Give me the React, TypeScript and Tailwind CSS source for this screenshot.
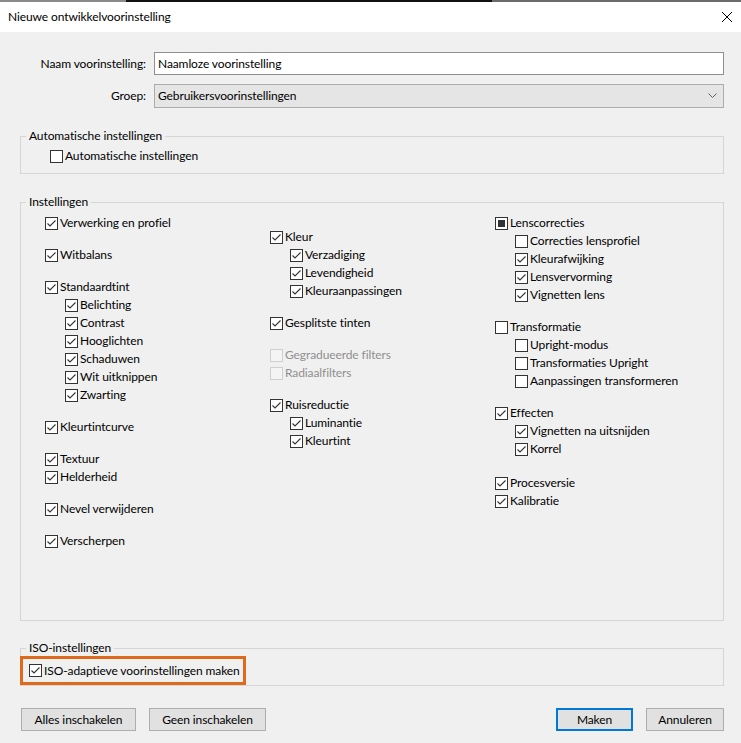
import React from 'react';

type State = 'on' | 'off' | 'mixed' | 'disabled';

interface Item {
  label: string;
  state?: State;
  sub?: boolean;
}

const Check: React.FC<{ state: State }> = ({ state }) => (
  <span
    className={`w-[13px] h-[13px] shrink-0 border flex items-center justify-center ${
      state === 'disabled' ? 'border-[#cfcfcf] bg-[#f4f4f4]' : 'border-[#333333] bg-white'
    }`}
  >
    {state === 'on' && (
      <svg width="11" height="11" viewBox="0 0 11 11">
        <path d="M1.5 5.5 L4 8 L9.5 2.5" fill="none" stroke="#333333" strokeWidth="1.1" />
      </svg>
    )}
    {state === 'mixed' && <span className="w-[7px] h-[7px] bg-[#333333]" />}
  </span>
);

const Row: React.FC<{ item: Item }> = ({ item }) => {
  const state = item.state ?? 'on';
  return (
    <div className={`h-[18px] flex items-center gap-[2px] ${item.sub ? 'pl-[20px]' : ''}`}>
      <Check state={state} />
      <span className={`whitespace-nowrap ${state === 'disabled' ? 'text-[#8f8f8f]' : 'text-black'}`}>
        {item.label}
      </span>
    </div>
  );
};

const col1: Item[][] = [
  [{ label: 'Verwerking en profiel' }],
  [{ label: 'Witbalans' }],
  [
    { label: 'Standaardtint' },
    { label: 'Belichting', sub: true },
    { label: 'Contrast', sub: true },
    { label: 'Hooglichten', sub: true },
    { label: 'Schaduwen', sub: true },
    { label: 'Wit uitknippen', sub: true },
    { label: 'Zwarting', sub: true },
  ],
  [{ label: 'Kleurtintcurve' }],
  [{ label: 'Textuur' }, { label: 'Helderheid' }],
  [{ label: 'Nevel verwijderen' }],
  [{ label: 'Verscherpen' }],
];

const col2: Item[][] = [
  [
    { label: 'Kleur' },
    { label: 'Verzadiging', sub: true },
    { label: 'Levendigheid', sub: true },
    { label: 'Kleuraanpassingen', sub: true },
  ],
  [{ label: 'Gesplitste tinten' }],
  [
    { label: 'Gegradueerde filters', state: 'disabled' },
    { label: 'Radiaalfilters', state: 'disabled' },
  ],
  [
    { label: 'Ruisreductie' },
    { label: 'Luminantie', sub: true },
    { label: 'Kleurtint', sub: true },
  ],
];

const col3: Item[][] = [
  [
    { label: 'Lenscorrecties', state: 'mixed' },
    { label: 'Correcties lensprofiel', sub: true, state: 'off' },
    { label: 'Kleurafwijking', sub: true },
    { label: 'Lensvervorming', sub: true },
    { label: 'Vignetten lens', sub: true },
  ],
  [
    { label: 'Transformatie', state: 'off' },
    { label: 'Upright-modus', sub: true, state: 'off' },
    { label: 'Transformaties Upright', sub: true, state: 'off' },
    { label: 'Aanpassingen transformeren', sub: true, state: 'off' },
  ],
  [
    { label: 'Effecten' },
    { label: 'Vignetten na uitsnijden', sub: true },
    { label: 'Korrel', sub: true },
  ],
  [{ label: 'Procesversie' }, { label: 'Kalibratie' }],
];

const Column: React.FC<{ groups: Item[][]; top: string }> = ({ groups, top }) => (
  <div className={`flex flex-col gap-[14px] ${top}`}>
    {groups.map((g, i) => (
      // last block in the right column sits a touch lower in the original
      <div key={i} className={`flex flex-col ${i === 3 && g[0].label === 'Procesversie' ? 'mt-[2px]' : ''}`}>
        {g.map((it) => (
          <Row key={it.label} item={it} />
        ))}
      </div>
    ))}
  </div>
);

const Legend: React.FC<{ children: React.ReactNode }> = ({ children }) => (
  <legend className="ml-[5px] px-[3px] leading-[16px] text-black">{children}</legend>
);

const Button: React.FC<{ children: React.ReactNode; w: string; primary?: boolean }> = ({ children, w, primary }) => (
  <button
    className={`${w} h-[23px] bg-[#e1e1e1] text-black flex items-center justify-center ${
      primary ? 'border-2 border-[#0078d7]' : 'border border-[#adadad]'
    }`}
  >
    {children}
  </button>
);

export default function App() {
  return (
    <div className="w-[741px] h-[743px] bg-[#f0f0f0] text-[12px] tracking-[-0.1px] text-black overflow-hidden font-['Lato',sans-serif]">
      {/* top edge of the window behind */}
      <div className="h-[2px] flex">
        <div className="w-[126px] bg-[#8a8a8a]" />
        <div className="w-[366px] bg-[#111111]" />
        <div className="flex-1 bg-[#6a6a6a]" />
      </div>

      {/* Title bar */}
      <div className="h-[30px] bg-white flex items-center justify-between pl-[8px] pr-[8px]">
        <span>Nieuwe ontwikkelvoorinstelling</span>
        <svg width="12" height="12" viewBox="0 0 12 12">
          <path d="M1 1 L11 11 M11 1 L1 11" stroke="#000" strokeWidth="1" fill="none" />
        </svg>
      </div>

      <div className="pl-[20px] pr-[17px] pt-[20px]">
        {/* Name + group */}
        <div className="flex flex-col gap-[9px]">
          <div className="flex items-center gap-[8px]">
            <span className="w-[126px] text-right whitespace-nowrap">Naam voorinstelling:</span>
            <div className="flex-1 h-[23px] bg-white border border-[#8f8f8f] flex items-center px-[3px]">
              Naamloze voorinstelling
            </div>
          </div>
          <div className="flex items-center gap-[8px]">
            <span className="w-[126px] text-right">Groep:</span>
            <div className="flex-1 h-[24px] bg-[#e5e5e5] border border-[#acacac] flex items-center justify-between pl-[3px] pr-[6px]">
              <span>Gebruikersvoorinstellingen</span>
              <svg width="9" height="6" viewBox="0 0 9 6">
                <path d="M0.5 0.5 L4.5 4.5 L8.5 0.5" stroke="#606060" strokeWidth="1" fill="none" />
              </svg>
            </div>
          </div>
        </div>

        {/* Automatische instellingen */}
        <fieldset className="mt-[20px] border border-[#d5d5d5]">
          <Legend>Automatische instellingen</Legend>
          <div className="pl-[29px] pt-[3px] pb-[8px]">
            <Row item={{ label: 'Automatische instellingen', state: 'off' }} />
          </div>
        </fieldset>

        {/* Instellingen */}
        <fieldset className="mt-[20px] border border-[#d5d5d5]">
          <Legend>Instellingen</Legend>
          <div className="h-[410px] pl-[24px] grid grid-cols-[225px_225px_1fr]">
            <Column groups={col1} top="pt-[4px]" />
            <Column groups={col2} top="pt-[18px]" />
            <Column groups={col3} top="pt-[4px]" />
          </div>
        </fieldset>

        {/* ISO-instellingen */}
        <fieldset className="mt-[19px] border border-[#d5d5d5]">
          <Legend>ISO-instellingen</Legend>
          <div className="-ml-[1px] w-[226px] h-[29px] border-[3px] border-[#e06a1c] flex items-center pl-[6px]">
            <Row item={{ label: 'ISO-adaptieve voorinstellingen maken' }} />
          </div>
        </fieldset>

        {/* Footer buttons */}
        <div className="mt-[22px] ml-[1px] flex items-center justify-between">
          <div className="flex gap-[13px]">
            <Button w="w-[115px]">Alles inschakelen</Button>
            <Button w="w-[117px]">Geen inschakelen</Button>
          </div>
          <div className="flex gap-[13px]">
            <Button w="w-[77px]" primary>
              Maken
            </Button>
            <Button w="w-[78px]">Annuleren</Button>
          </div>
        </div>
      </div>
    </div>
  );
}
